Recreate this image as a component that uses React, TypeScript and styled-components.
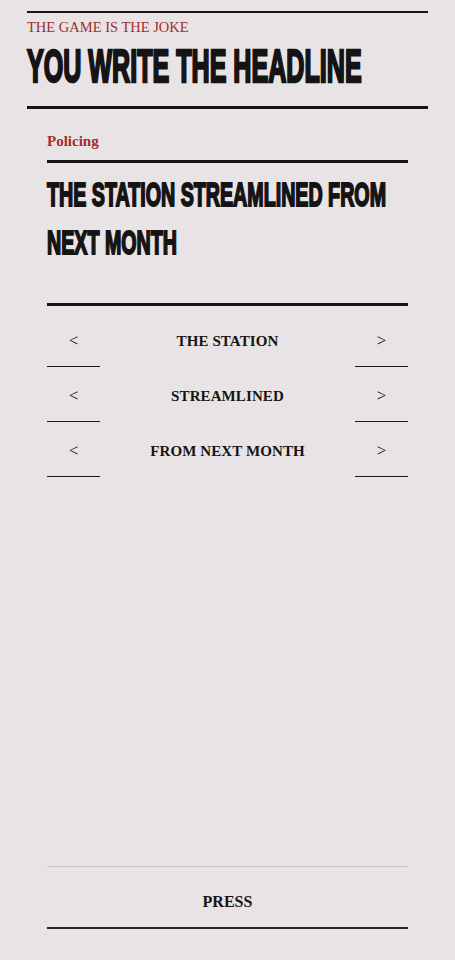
import { FC, useState } from "react";
import styled, { createGlobalStyle } from "styled-components";

const GlobalStyle = createGlobalStyle`
  html, body {
    margin: 0;
    background: #e8e4e5;
    overflow-x: hidden;
  }
  body {
    font-family: "Liberation Serif", "DejaVu Serif", serif;
    color: #161314;
  }
`;

const options = [
  ["THE STATION", "THE POLICE", "THE FORCE"],
  ["STREAMLINED", "CLOSED", "REOPENED"],
  ["FROM NEXT MONTH", "FROM TODAY", "NEXT YEAR"],
];

/**
 * 見出しゲーム画面.
 */
const App: FC = () => {
  const [picks, setPicks] = useState([0, 0, 0]);

  const move = (row: number, step: number) => {
    setPicks((prev) =>
      prev.map((p, i) =>
        i === row ? (p + step + options[i].length) % options[i].length : p
      )
    );
  };

  const headline = picks.map((p, i) => options[i][p]).join(" ");

  return (
    <Page>
      <GlobalStyle />
      <Masthead>
        <Kicker>THE GAME IS THE JOKE</Kicker>
        <Display $size={47} $lh={52} $squeeze={0.534} $stroke={2.6}>
          YOU WRITE THE HEADLINE
        </Display>
      </Masthead>

      <Story>
        <Section>Policing</Section>
        <HeadlineBox>
          <Display as="h2" $size={33.5} $lh={48} $squeeze={0.587} $stroke={2}>
            {headline}
          </Display>
        </HeadlineBox>

        <Picker>
          {options.map((row, i) => (
            <Row key={i}>
              <Arrow onClick={() => move(i, -1)}>&lt;</Arrow>
              <Word>{row[picks[i]]}</Word>
              <Arrow onClick={() => move(i, 1)}>&gt;</Arrow>
            </Row>
          ))}
        </Picker>
      </Story>

      <Footer>
        <PressButton>PRESS</PressButton>
      </Footer>
    </Page>
  );
};

export default App;

const Page = styled.div`
  min-height: 100vh;
  box-sizing: border-box;
  padding: 11px 27px 0;
  display: flex;
  flex-direction: column;
`;

const Masthead = styled.header`
  border-top: 2px solid #161314;
  border-bottom: 3px solid #161314;
  padding: 6px 0 14px;
`;

const Kicker = styled.div`
  color: #a42c2c;
  font-size: 14.5px;
  line-height: 17px;
  margin-bottom: 4px;
`;

const Display = styled.h1<{
  $size: number;
  $lh: number;
  $squeeze: number;
  $stroke: number;
}>`
  margin: 0;
  font-family: "Liberation Sans", Arial, sans-serif;
  font-weight: 700;
  font-size: ${(p) => p.$size}px;
  line-height: ${(p) => p.$lh}px;
  width: ${(p) => 100 / p.$squeeze}%;
  transform: scaleX(${(p) => p.$squeeze});
  transform-origin: left top;
  -webkit-text-stroke: ${(p) => p.$stroke}px #161314;
  color: #161314;
`;

const Story = styled.main`
  padding: 23px 20px 0;
`;

const Section = styled.div`
  color: #a42c2c;
  font-size: 15px;
  font-weight: 700;
  line-height: 18px;
  padding-bottom: 10px;
  border-bottom: 3px solid #161314;
`;

const HeadlineBox = styled.div`
  padding: 8px 0 36px;
  border-bottom: 3px solid #161314;
`;

const Picker = styled.div`
  display: flex;
  flex-direction: column;
  gap: 5px;
  margin-top: 11px;
`;

const Row = styled.div`
  display: grid;
  grid-template-columns: 53px 1fr 53px;
  height: 50px;
`;

const Arrow = styled.button`
  border: 0;
  border-bottom: 1px solid #1d1a1b;
  background: none;
  padding: 0 0 2px;
  font-family: "Liberation Serif", "DejaVu Serif", serif;
  font-size: 17px;
  color: #161314;
  cursor: pointer;
`;

const Word = styled.div`
  display: flex;
  align-items: center;
  justify-content: center;
  padding-bottom: 2px;
  font-size: 15px;
  font-weight: 700;
  letter-spacing: 0.1px;
`;

const Footer = styled.footer`
  margin-top: auto;
  padding: 0 20px 31px;
`;

const PressButton = styled.button`
  display: block;
  width: 100%;
  height: 63px;
  padding: 10px 0 0;
  border: 0;
  border-top: 1px solid #c9c5c6;
  border-bottom: 2px solid #2a2728;
  background: none;
  font-family: "Liberation Serif", "DejaVu Serif", serif;
  font-size: 16px;
  font-weight: 700;
  color: #161314;
  cursor: pointer;
`;
